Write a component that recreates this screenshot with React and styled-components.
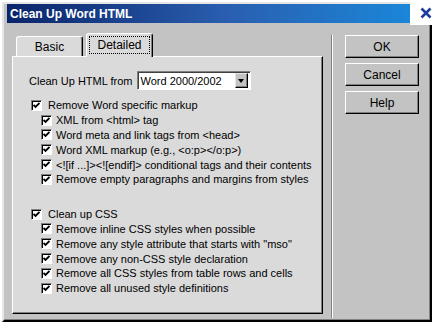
import React from "react";
import styled, { createGlobalStyle } from "styled-components";

const GlobalStyle = createGlobalStyle`
  body {
    margin: 0;
    background: #fff;
    font-family: "Liberation Sans", Arial, sans-serif;
    font-size: 11px;
    color: #000;
  }
`;

const Page = styled.div`
  position: relative;
  width: 442px;
  height: 329px;
  padding: 2px 0 0 2px;
  box-sizing: border-box;
`;

const Window = styled.div`
  width: 430px;
  height: 320px;
  box-sizing: border-box;
  background: #c3c3c3;
  border: 2px solid;
  border-color: #e6e6e6 #000 #000 #e6e6e6;
  box-shadow: inset -1px -1px 0 #808080;
  display: flex;
  flex-direction: column;
`;

const TitleBar = styled.div`
  height: 19px;
  margin: 0 20px 0 3px;
  background: linear-gradient(to right, #0a246a 0%, #2a5fb0 55%, #1b86d8 100%);
  color: #fff;
  font-weight: 700;
  font-size: 12px;
  display: flex;
  align-items: center;
  padding-left: 3px;
`;

const CloseCorner = styled.div`
  position: absolute;
  top: 0;
  right: 0;
  width: 32px;
  height: 25px;
  background: #fff;
  display: flex;
  align-items: center;
  justify-content: center;
`;

const Body = styled.div`
  flex: 1;
  display: flex;
  padding: 10px 0 0 8px;
`;

const LeftCol = styled.div`
  width: 311px;
  display: flex;
  flex-direction: column;
`;

const TabRow = styled.div`
  height: 23px;
  display: flex;
  align-items: flex-end;
  position: relative;
  z-index: 1;
`;

const Tab = styled.div`
  width: 67px;
  height: ${(p) => (p.$active ? "24px" : "20px")};
  margin-left: ${(p) => p.$offset}px;
  box-sizing: border-box;
  background: #dadada;
  border-top: 1px solid #fff;
  border-left: 1px solid #fff;
  border-right: 1px solid #000;
  box-shadow: inset -1px 0 0 #808080;
  border-radius: 3px 3px 0 0;
  display: flex;
  align-items: center;
  justify-content: center;
  font-size: 12px;
  padding-bottom: ${(p) => (p.$active ? "2px" : "0")};
  margin-bottom: ${(p) => (p.$active ? "-1px" : "0")};
`;

const FocusLabel = styled.span`
  border: 1px dotted #000;
  padding: 1px 7px;
`;

const Panel = styled.div`
  height: 258px;
  box-sizing: border-box;
  background: #dadada;
  border-top: 1px solid #fff;
  border-left: 1px solid #fff;
  border-right: 1px solid #000;
  border-bottom: 1px solid #000;
  box-shadow: inset -1px -1px 0 #808080;
  padding: 14px 0 0 16px;
  display: flex;
  flex-direction: column;
`;

const SourceRow = styled.div`
  display: flex;
  align-items: center;
  height: 19px;
  margin-bottom: 8px;
`;

const Select = styled.div`
  margin-left: 4px;
  width: 114px;
  height: 19px;
  box-sizing: border-box;
  background: #fff;
  border-top: 1px solid #808080;
  border-left: 1px solid #808080;
  border-right: 1px solid #fff;
  border-bottom: 1px solid #fff;
  box-shadow: inset 1px 1px 0 #404040;
  display: flex;
  align-items: center;
  padding: 0 2px 0 3px;
`;

const SelectText = styled.span`
  flex: 1;
`;

const DropButton = styled.div`
  width: 13px;
  height: 15px;
  box-sizing: border-box;
  background: #c3c3c3;
  border-top: 1px solid #e6e6e6;
  border-left: 1px solid #e6e6e6;
  border-right: 1px solid #000;
  border-bottom: 1px solid #000;
  box-shadow: inset -1px -1px 0 #808080;
  display: flex;
  align-items: center;
  justify-content: center;
`;

const Arrow = styled.div`
  width: 0;
  height: 0;
  border-left: 3.5px solid transparent;
  border-right: 3.5px solid transparent;
  border-top: 4px solid #000;
`;

const Group = styled.div`
  display: flex;
  flex-direction: column;
  margin-bottom: ${(p) => p.$gap || 0}px;
`;

const CheckRow = styled.label`
  display: flex;
  align-items: center;
  height: 14.8px;
  padding-left: ${(p) => (p.$child ? 12 : 2)}px;
  white-space: nowrap;
`;

const Box = styled.span`
  width: 11px;
  height: 11px;
  box-sizing: border-box;
  background: #fff;
  border-top: 1px solid #808080;
  border-left: 1px solid #808080;
  border-right: 1px solid #fff;
  border-bottom: 1px solid #fff;
  box-shadow: inset 1px 1px 0 #000;
  margin-right: ${(p) => (p.$child ? 4 : 6)}px;
  display: flex;
  align-items: center;
  justify-content: center;
  flex-shrink: 0;
`;

const Separator = styled.div`
  margin: 2px 0 0 8px;
  width: 1px;
  height: 283px;
  background: #808080;
  border-right: 1px solid #fff;
`;

const ButtonCol = styled.div`
  margin: 2px 0 0 12px;
  display: flex;
  flex-direction: column;
  gap: 5px;
`;

const Button = styled.div`
  width: 74px;
  height: 23px;
  box-sizing: border-box;
  background: #c3c3c3;
  border-top: 1px solid #fff;
  border-left: 1px solid #fff;
  border-right: 1px solid #000;
  border-bottom: 1px solid #000;
  box-shadow: inset -1px -1px 0 #808080;
  display: flex;
  align-items: center;
  justify-content: center;
  font-size: 12px;
`;

const Check = () => (
  <svg width="7" height="7" viewBox="0 0 7 7">
    <path d="M0.5 3 L2.5 5 L6.5 1" stroke="#000" strokeWidth="1.8" fill="none" />
  </svg>
);

const CheckItem = ({ child, children }) => (
  <CheckRow $child={child}>
    <Box $child={child}>
      <Check />
    </Box>
    {children}
  </CheckRow>
);

const wordItems = [
  "XML from <html> tag",
  "Word meta and link tags from <head>",
  "Word XML markup (e.g., <o:p></o:p>)",
  "<![if ...]><![endif]> conditional tags and their contents",
  "Remove empty paragraphs and margins from styles",
];

const cssItems = [
  "Remove inline CSS styles when possible",
  'Remove any style attribute that starts with "mso"',
  "Remove any non-CSS style declaration",
  "Remove all CSS styles from table rows and cells",
  "Remove all unused style definitions",
];

export default function App() {
  return (
    <Page>
      <GlobalStyle />
      <Window>
        <TitleBar>Clean Up Word HTML</TitleBar>
        <Body>
          <LeftCol>
            <TabRow>
              <Tab $offset={4}>Basic</Tab>
              <Tab $offset={3} $active>
                <FocusLabel>Detailed</FocusLabel>
              </Tab>
            </TabRow>
            <Panel>
              <SourceRow>
                Clean Up HTML from
                <Select>
                  <SelectText>Word 2000/2002</SelectText>
                  <DropButton>
                    <Arrow />
                  </DropButton>
                </Select>
              </SourceRow>
              <Group $gap={20}>
                <CheckItem>Remove Word specific markup</CheckItem>
                {wordItems.map((t) => (
                  <CheckItem child key={t}>
                    {t}
                  </CheckItem>
                ))}
              </Group>
              <Group>
                <CheckItem>Clean up CSS</CheckItem>
                {cssItems.map((t) => (
                  <CheckItem child key={t}>
                    {t}
                  </CheckItem>
                ))}
              </Group>
            </Panel>
          </LeftCol>
          <Separator />
          <ButtonCol>
            <Button>OK</Button>
            <Button>Cancel</Button>
            <Button>Help</Button>
          </ButtonCol>
        </Body>
      </Window>
      <CloseCorner>
        <svg width="12" height="12" viewBox="0 0 12 12">
          <path d="M1.5 1.5 L10.5 10.5 M10.5 1.5 L1.5 10.5" stroke="#1f3c9c" strokeWidth="2.6" />
        </svg>
      </CloseCorner>
    </Page>
  );
}
